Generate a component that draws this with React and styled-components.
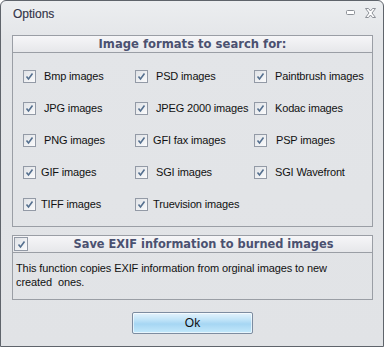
import React from "react";
import styled, { createGlobalStyle } from "styled-components";

const GlobalStyle = createGlobalStyle`
  html, body {
    margin: 0;
    padding: 0;
    background: #ffffff;
  }
  body {
    font-family: "Liberation Sans", Arial, sans-serif;
  }
`;

const Window = styled.div`
  box-sizing: border-box;
  width: 384px;
  height: 347px;
  border: 1px solid #5f646b;
  border-radius: 6px 6px 0 0;
  background: linear-gradient(#eceef0 0px, #e3e5e8 40px, #e1e3e6 100%);
  display: flex;
  flex-direction: column;
  overflow: hidden;
`;

const TitleBar = styled.div`
  height: 24px;
  display: flex;
  align-items: center;
  justify-content: space-between;
  padding: 0 7px 0 12px;
`;

const Title = styled.span`
  font-size: 12px;
  color: #35364a;
  text-shadow: 0 0 3px #ffffff;
  padding-top: 1px;
  -webkit-text-stroke: 0.2px #35364a;
`;

const Controls = styled.div`
  display: flex;
  align-items: center;
  gap: 10px;
  margin-top: -1px;
`;

const Content = styled.div`
  flex: 1;
  display: flex;
  flex-direction: column;
  padding: 10px 10px 0 11px;
`;

const Group = styled.div`
  border: 1px solid #9a9ea5;
  display: flex;
  flex-direction: column;
  margin-top: ${(p) => p.$gap || 0}px;
`;

const GroupHeader = styled.div`
  position: relative;
  height: 16px;
  padding-left: ${(p) => p.$indent || 0}px;
  border-bottom: 1px solid #9a9ea5;
  background: linear-gradient(#f6f6f8, #e6e7ea);
  display: flex;
  align-items: center;
  justify-content: center;
  font-family: "DejaVu Sans", Verdana, sans-serif;
  font-weight: bold;
  font-size: ${(p) => p.$size || 11.6}px;
  color: #4b5170;
`;

const HeaderBox = styled.div`
  position: absolute;
  left: 1px;
  top: 1px;
`;

const FormatGrid = styled.div`
  display: grid;
  grid-template-columns: 112px 119px 1fr;
  grid-auto-rows: 32px;
  padding: 7px 0 6px 10px;
`;

const Option = styled.label`
  display: flex;
  align-items: center;
  gap: ${(p) => p.$gap ?? 8}px;
  font-size: 11px;
  letter-spacing: -0.15px;
  color: #111111;
  white-space: nowrap;
`;

const BoxFrame = styled.span`
  box-sizing: border-box;
  width: ${(p) => p.$size}px;
  height: ${(p) => p.$size}px;
  flex: none;
  border: 1px solid #939aa6;
  background: linear-gradient(135deg, #dfe2e6, #fbfbfc);
  display: flex;
  align-items: center;
  justify-content: center;
`;

const Description = styled.div`
  padding: 8px 3px 8px 3px;
  font-size: 11px;
  letter-spacing: -0.1px;
  line-height: 14px;
  color: #111111;
  min-height: 30px;
`;

const Footer = styled.div`
  display: flex;
  justify-content: center;
  padding-top: 12px;
`;

const OkButton = styled.button`
  box-sizing: border-box;
  width: 121px;
  height: 22px;
  border: 1px solid #7d8ca0;
  border-radius: 2px;
  background: linear-gradient(#e4f3fc 0%, #bfe3f8 35%, #a6d6f3 55%, #c4e9fb 100%);
  box-shadow: inset 0 0 0 1px rgba(255, 255, 255, 0.6);
  font-family: "Liberation Sans", Arial, sans-serif;
  font-size: 12px;
  color: #111111;
  padding: 0;
`;

const Check = ({ size = 13 }) => (
  <BoxFrame $size={size}>
    <svg width="9" height="9" viewBox="0 0 9 9">
      <path d="M1.5 4.5 L3.5 7 L7.5 1.5" fill="none" stroke="#55708f" strokeWidth="1.6" />
    </svg>
  </BoxFrame>
);

const MinimizeIcon = () => (
  <svg width="9" height="5" viewBox="0 0 9 5">
    <rect x="0.5" y="0.5" width="8" height="4" rx="1" fill="#ffffff" stroke="#8c9097" />
  </svg>
);

const CloseIcon = () => (
  <svg width="11" height="10" viewBox="0 0 11 10">
    <path
      d="M0.5 0.5 H3.5 L5.5 3 L7.5 0.5 H10.5 L7 5 L10.5 9.5 H7.5 L5.5 7 L3.5 9.5 H0.5 L4 5 Z"
      fill="#ffffff"
      stroke="#8c9097"
      strokeWidth="1"
      strokeLinejoin="round"
    />
  </svg>
);

const formats = [
  ["Bmp images", 8],
  ["PSD images", 8],
  ["Paintbrush images", 8],
  ["JPG images", 8],
  ["JPEG 2000 images", 8],
  ["Kodac images", 8],
  ["PNG images", 8],
  ["GFI fax images", 5],
  ["PSP images", 9],
  ["GIF images", 5],
  ["SGI images", 8],
  ["SGI Wavefront", 8],
  ["TIFF images", 5],
  ["Truevision images", 5],
];

export default function App() {
  return (
    <>
      <GlobalStyle />
      <Window>
        <TitleBar>
          <Title>Options</Title>
          <Controls>
            <MinimizeIcon />
            <CloseIcon />
          </Controls>
        </TitleBar>
        <Content>
          <Group>
            <GroupHeader>Image formats to search for:</GroupHeader>
            <FormatGrid>
              {formats.map(([name, gap]) => (
                <Option key={name} $gap={gap}>
                  <Check />
                  {name}
                </Option>
              ))}
            </FormatGrid>
          </Group>
          <Group $gap={8}>
            <GroupHeader $indent={22} $size={11.4}>
              <HeaderBox>
                <Check size={14} />
              </HeaderBox>
              Save EXIF information to burned images
            </GroupHeader>
            <Description>
              This function copies EXIF information from orginal images to new
              <br />
              created&nbsp; ones.
            </Description>
          </Group>
          <Footer>
            <OkButton>Ok</OkButton>
          </Footer>
        </Content>
      </Window>
    </>
  );
}
